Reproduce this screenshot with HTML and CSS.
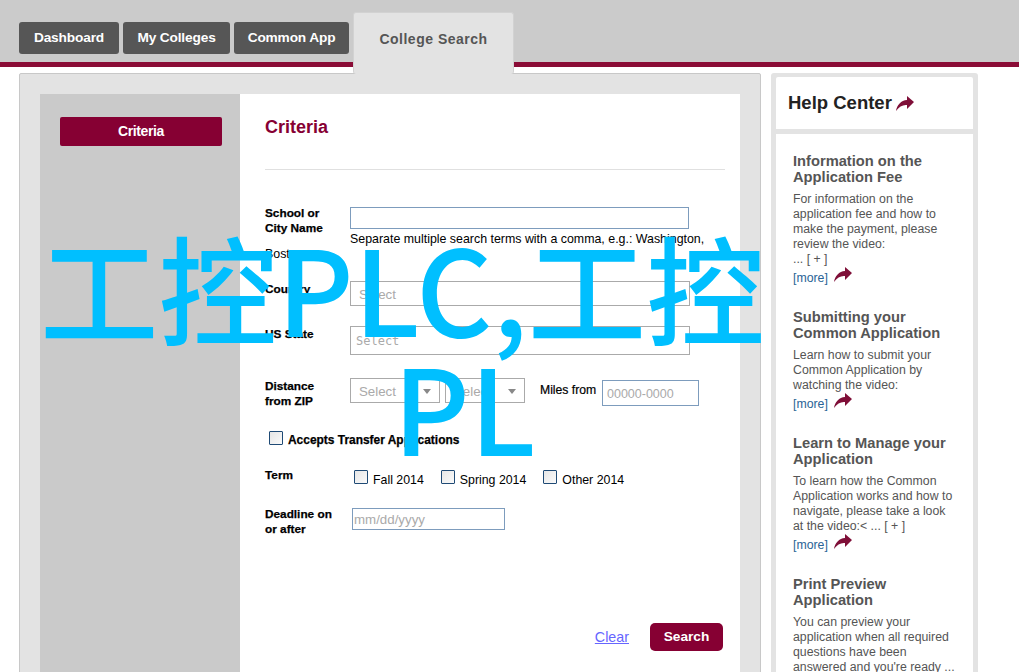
FILE: index.html
```html
<!DOCTYPE html>
<html lang="en">
<head>
    <meta charset="UTF-8">
    <meta name="viewport" content="width=device-width, initial-scale=1.0">
    <title>College Search</title>
    <link rel="stylesheet" href="styles.css">
</head>
<body>
    <div class="header">
        <div class="tabs">
            <a class="tab tab-dashboard" href="#">Dashboard</a>
            <a class="tab tab-colleges" href="#">My Colleges</a>
            <a class="tab tab-common" href="#">Common App</a>
            <a class="tab tab-active" href="#">College Search</a>
        </div>
    </div>

    <div class="page">
        <div class="main-panel">
            <div class="main-inner">
                <div class="side-nav">
                    <a class="side-button" href="#">Criteria</a>
                </div>
                <div class="criteria">
                    <h2 class="criteria-title">Criteria</h2>

                    <div class="row row-school">
                        <div class="label">School or<br>City Name</div>
                        <div class="field">
                            <div class="input input-school"></div>
                            <div class="hint">Separate multiple search terms with a comma, e.g.: Washington,</div>
                            <div class="hint hint-wrap">Boston</div>
                        </div>
                    </div>
                    <div class="row row-country">
                        <div class="label">Country</div>
                        <div class="select select-wide">Select</div>
                    </div>
                    <div class="row row-state">
                        <div class="label">US State</div>
                        <div class="select select-wide select-mono">Select</div>
                    </div>
                    <div class="row row-distance">
                        <div class="label">Distance<br>from ZIP</div>
                        <div class="select select-small">Select<span class="caret"></span></div>
                        <div class="select select-small select-second">Select<span class="caret"></span></div>
                        <div class="miles">Miles from</div>
                        <div class="input input-zip">00000-0000</div>
                    </div>
                    <div class="row row-transfer">
                        <span class="check"></span>
                        <span class="transfer-label">Accepts Transfer Applications</span>
                    </div>
                    <div class="row row-term">
                        <div class="label">Term</div>
                        <div class="term-options">
                            <span class="check"></span><span class="term-label">Fall 2014</span>
                            <span class="check"></span><span class="term-label">Spring 2014</span>
                            <span class="check"></span><span class="term-label">Other 2014</span>
                        </div>
                    </div>
                    <div class="row row-deadline">
                        <div class="label">Deadline on<br>or after</div>
                        <div class="input input-date">mm/dd/yyyy</div>
                    </div>
                    <div class="actions">
                        <a class="clear-link" href="#">Clear</a>
                        <a class="search-button" href="#">Search</a>
                    </div>
                </div>
            </div>
        </div>

        <div class="help">
            <div class="help-head">
                <h2 class="help-title">Help Center</h2>
                <svg class="arrow arrow-title" viewBox="0 0 18 15"><path d="M0 15C1 9 5 4.5 11 4V0L18 6 11 13V9C7 8.5 3 10.5 0 15Z"/></svg>
            </div>
            <div class="help-body">
                <div class="help-item">
                    <h3 class="item-title">Information on the Application Fee</h3>
                    <p class="item-text">For information on the application fee and how to make the payment, please review the video:<br>... [ + ]</p>
                    <a class="more" href="#">[more]<svg class="arrow" viewBox="0 0 18 15"><path d="M0 15C1 9 5 4.5 11 4V0L18 6 11 13V9C7 8.5 3 10.5 0 15Z"/></svg></a>
                </div>
                <div class="help-item">
                    <h3 class="item-title">Submitting your Common Application</h3>
                    <p class="item-text">Learn how to submit your Common Application by watching the video:</p>
                    <a class="more" href="#">[more]<svg class="arrow" viewBox="0 0 18 15"><path d="M0 15C1 9 5 4.5 11 4V0L18 6 11 13V9C7 8.5 3 10.5 0 15Z"/></svg></a>
                </div>
                <div class="help-item">
                    <h3 class="item-title">Learn to Manage your Application</h3>
                    <p class="item-text">To learn how the Common Application works and how to navigate, please take a look at the video:&lt; ... [ + ]</p>
                    <a class="more" href="#">[more]<svg class="arrow" viewBox="0 0 18 15"><path d="M0 15C1 9 5 4.5 11 4V0L18 6 11 13V9C7 8.5 3 10.5 0 15Z"/></svg></a>
                </div>
                <div class="help-item">
                    <h3 class="item-title">Print Preview Application</h3>
                    <p class="item-text">You can preview your application when all required questions have been answered and you're ready ...</p>
                </div>
            </div>
        </div>
    </div>

    <div class="watermark">
        <div class="mark-line">工控PLC,工控</div>
        <div class="mark-line mark-second">PL</div>
    </div>
</body>
</html>
```

FILE: styles.css
```css
html, body {
    height: 672px;
}

body {
    margin: 0;
    padding: 0;
    overflow: hidden;
    background-color: white;
    font-family: "Liberation Sans", Arial, sans-serif;
    position: relative;
}

a {
    text-decoration: none;
}

/* header + tabs */
.header {
    height: 62px;
    background-color: #cbcbcb;
    border-bottom: 5px solid #8a0c36;
}

.tabs {
    display: flex;
    gap: 4px;
    padding: 22px 0 0 19px;
    align-items: flex-start;
}

.tab {
    height: 32px;
    line-height: 32px;
    text-align: center;
    background-color: #565656;
    color: white;
    border-radius: 3px;
    font-size: 13.7px;
    font-weight: bold;
    letter-spacing: -0.15px;
}

.tab-dashboard { width: 100px; }
.tab-colleges { width: 107px; }
.tab-common { width: 115px; }

.tab-active {
    height: 61px;
    width: 159px;
    margin-top: -10px;
    line-height: 52px;
    background-color: #e3e3e3;
    color: #555;
    border: 1px solid #d2d2d2;
    border-bottom: none;
    font-size: 14px;
    letter-spacing: 0.5px;
    position: relative;
}

/* main area */
.page {
    display: flex;
    align-items: flex-start;
    padding: 6px 0 0 19px;
    height: 599px;
    overflow: hidden;
}

.main-panel {
    width: 700px;
    flex-shrink: 0;
    padding: 20px;
    height: 640px;
    background-color: #e3e3e3;
    border: 1px solid #c8c8c8;
    border-radius: 2px 2px 0 0;
}

.main-inner {
    display: flex;
    height: 640px;
    background-color: white;
}

.side-nav {
    width: 200px;
    background-color: #cacaca;
    padding: 23px 18px 0 20px;
    box-sizing: border-box;
}

.side-button {
    display: block;
    height: 29px;
    line-height: 28px;
    background-color: #860033;
    color: white;
    text-align: center;
    border-radius: 2px;
    font-size: 14px;
    font-weight: bold;
    letter-spacing: -0.4px;
}

.criteria {
    width: 460px;
    margin-left: 25px;
}

.criteria-title {
    margin: 0 0 37px;
    padding: 23px 0 31px;
    height: 21px;
    line-height: 21px;
    font-size: 18px;
    color: #860033;
    border-bottom: 1px solid #e0e0e0;
}

.row {
    display: flex;
    align-items: flex-start;
}

.label {
    width: 85px;
    flex-shrink: 0;
    font-size: 11.8px;
    line-height: 15px;
    font-weight: bold;
    color: black;
    -webkit-text-stroke: 0.25px black;
}

.input {
    box-sizing: border-box;
    border: 1px solid #7d9cbd;
    background-color: white;
    color: #aaa;
    font-size: 12.5px;
}

.input-school {
    width: 339px;
    height: 22px;
    margin-bottom: 3px;
}

.hint {
    width: 370px;
    font-size: 12.4px;
    line-height: 15px;
    color: black;
}

.hint-wrap {
    margin-left: -85px;
}

.select {
    box-sizing: border-box;
    border: 1px solid #aaa;
    height: 25px;
    line-height: 26px;
    padding-left: 8px;
    color: #aaa;
    font-size: 13.3px;
    position: relative;
}

.select-wide {
    width: 340px;
}

.select-mono {
    height: 29px;
    padding-left: 5px;
    line-height: 28px;
    font-family: "DejaVu Sans Mono", monospace;
    font-size: 12px;
}

.select-small {
    width: 90px;
}

.select-second {
    width: 80px;
    margin-left: 5px;
}

.caret {
    position: absolute;
    right: 8px;
    top: 10px;
    border-left: 4px solid transparent;
    border-right: 4px solid transparent;
    border-top: 5px solid #888;
}

.miles {
    margin: 5px 0 0 15px;
    font-size: 12.2px;
    color: black;
    width: 62px;
    white-space: nowrap;
    -webkit-text-stroke: 0.2px black;
}

.input-zip {
    width: 97px;
    height: 26px;
    line-height: 26px;
    padding-left: 4px;
    margin-top: 2px;
}

.row-school { height: 74px; }
.row-country { height: 45px; }
.row-state { height: 52px; }
.row-distance { height: 40px; }
.row-transfer { height: 37px; padding: 13px 0 0 4px; }
.row-term { height: 39px; }

.row-school .label { margin-top: -1px; }
.row-country .label { padding-top: 1px; }
.row-state .label { padding-top: 1px; }
.row-distance .label { padding-top: 1px; }

.check {
    display: inline-block;
    box-sizing: border-box;
    width: 14px;
    height: 14px;
    flex-shrink: 0;
    border: 1px solid #1f4a75;
    border-radius: 1px;
    background: linear-gradient(135deg, #e6e6e6, #fafafa);
}

.transfer-label {
    margin: 2px 0 0 5px;
    font-size: 11.95px;
    line-height: 15px;
    font-weight: bold;
    color: black;
    -webkit-text-stroke: 0.25px black;
}

.term-options {
    display: flex;
    align-items: flex-start;
    margin: 2px 0 0 4px;
}

.term-label {
    margin: 3px 17px 0 5px;
    font-size: 12.35px;
    color: black;
}

.input-date {
    width: 153px;
    height: 22px;
    line-height: 22px;
    padding-left: 1px;
    margin: 1px 0 0 2px;
    font-size: 13.3px;
}

.actions {
    display: flex;
    align-items: center;
    justify-content: flex-end;
    gap: 21px;
    margin-top: 86px;
    width: 458px;
}

.clear-link {
    color: #6666ff;
    font-size: 14.3px;
    text-decoration: underline;
}

.search-button {
    width: 73px;
    height: 28px;
    line-height: 27px;
    text-align: center;
    background-color: #860033;
    color: white;
    border-radius: 5px;
    font-size: 13.7px;
    font-weight: bold;
}

/* help column */
.help {
    width: 197px;
    margin-left: 10px;
    padding: 4px 5px 0;
    background-color: #e3e3e3;
    border-radius: 3px 3px 0 0;
    height: 640px;
}

.help-head {
    display: flex;
    align-items: center;
    height: 52px;
    padding-left: 12px;
    background-color: white;
    border-radius: 2px 2px 0 0;
}

.help-title {
    margin: 0;
    font-size: 18.5px;
    color: #222;
}

.arrow {
    width: 18px;
    height: 15px;
    flex-shrink: 0;
    fill: #7f0f38;
}

.arrow-title {
    margin-left: 4px;
}

.help-body {
    margin-top: 5px;
    padding: 19px 16px 0 17px;
    width: 164px;
    height: 600px;
    background-color: white;
}

.help-item {
    margin-bottom: 23px;
}

.item-title {
    margin: 0 0 7px;
    font-size: 14.7px;
    line-height: 16px;
    color: #555;
}

.item-text {
    margin: 0;
    font-size: 12.3px;
    line-height: 15px;
    color: #555;
}

.more {
    display: flex;
    align-items: flex-start;
    gap: 6px;
    margin-top: 4px;
    height: 15px;
    font-size: 12.3px;
    line-height: 15px;
    color: #2a6496;
}

.more .arrow {
    margin-top: -4px;
}

/* big text stamped across the page */
.watermark {
    position: absolute;
    left: 40px;
    top: 226px;
    color: #00bfff;
    font-family: "Noto Sans CJK SC", "Noto Sans", sans-serif;
    font-size: 118.5px;
    font-weight: 500;
    line-height: 119px;
    white-space: nowrap;
}

.mark-second {
    padding-left: 353px;
}
```
